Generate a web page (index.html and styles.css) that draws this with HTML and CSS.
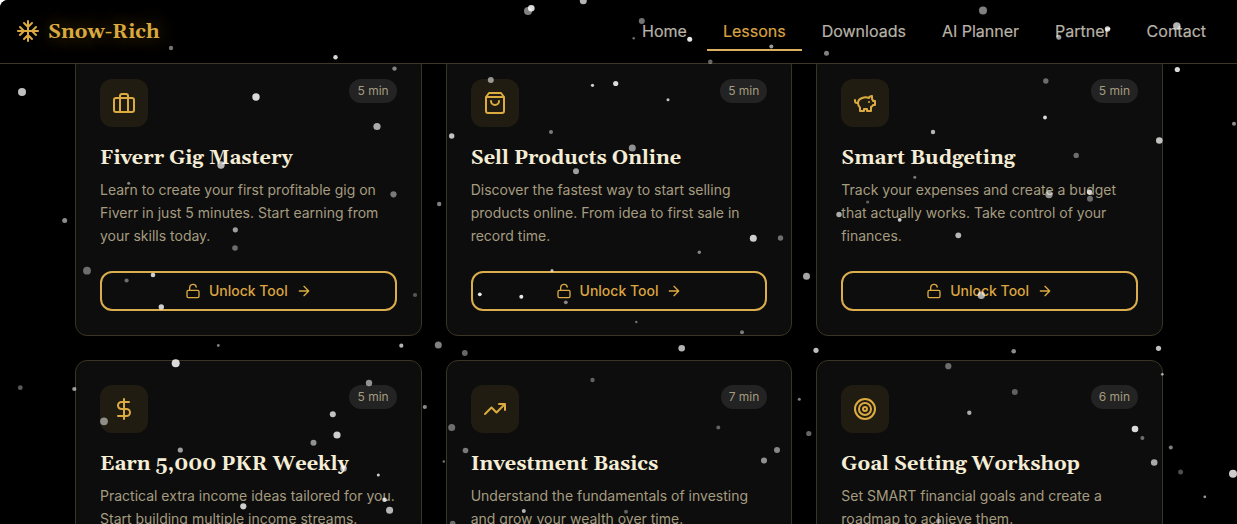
FILE: index.html
```
<!DOCTYPE html>
<html lang="en">
<head>
    <meta charset="UTF-8">
    <title>Snow-Rich</title>
    <link rel="stylesheet" href="styles.css">
</head>
<body>
<!-- shared icons -->
<svg class="sprite">
    <symbol id="unlock" viewBox="0 0 24 24"><rect x="3" y="11" width="18" height="11" rx="2"/><path d="M7 11V7a5 5 0 0 1 9.9-1"/></symbol>
    <symbol id="arrow" viewBox="0 0 24 24"><path d="M5 12h14M12 5l7 7-7 7"/></symbol>
</svg>

<div class="page">
    <header class="header">
        <a class="logo">
            <svg class="icon" viewBox="0 0 24 24"><path d="M2 12h20M12 2v20M20 16l-4-4 4-4M4 8l4 4-4 4M16 4l-4 4-4-4M8 20l4-4 4 4"/></svg>
            <span class="logo-text serif">Snow-Rich</span>
        </a>
        <nav class="nav">
            <a class="nav-link">Home</a>
            <a class="nav-link active">Lessons</a>
            <a class="nav-link">Downloads</a>
            <a class="nav-link">AI Planner</a>
            <a class="nav-link">Partner</a>
            <a class="nav-link">Contact</a>
        </nav>
    </header>

    <main class="lessons">
        <div class="card">
            <div class="card-top">
                <div class="card-icon"><svg class="icon" viewBox="0 0 24 24"><rect x="2" y="7" width="20" height="14" rx="2"/><path d="M16 21V5a2 2 0 0 0-2-2h-4a2 2 0 0 0-2 2v16"/></svg></div>
                <span class="time">5 min</span>
            </div>
            <h3 class="title serif">Fiverr Gig Mastery</h3>
            <p class="desc">Learn to create your first profitable gig on Fiverr in just 5 minutes. Start earning from your skills today.</p>
            <button class="unlock"><svg class="icon small"><use href="#unlock"/></svg>Unlock Tool<svg class="icon small"><use href="#arrow"/></svg></button>
        </div>
        <div class="card">
            <div class="card-top">
                <div class="card-icon"><svg class="icon" viewBox="0 0 24 24"><path d="M6 2 3 6v14a2 2 0 0 0 2 2h14a2 2 0 0 0 2-2V6l-3-4ZM3 6h18M16 10a4 4 0 0 1-8 0"/></svg></div>
                <span class="time">5 min</span>
            </div>
            <h3 class="title serif">Sell Products Online</h3>
            <p class="desc">Discover the fastest way to start selling products online. From idea to first sale in record time.</p>
            <button class="unlock"><svg class="icon small"><use href="#unlock"/></svg>Unlock Tool<svg class="icon small"><use href="#arrow"/></svg></button>
        </div>
        <div class="card">
            <div class="card-top">
                <div class="card-icon"><svg class="icon" viewBox="0 0 24 24"><path d="M19 5c-1.5 0-2.8 1.4-3 2-3.5-1.5-11-.3-11 5 0 1.8 0 3 2 4.5V20h4v-2h3v2h4v-4c1-.5 1.7-1 2-2h2v-4h-2c0-1-.5-1.5-1-2V5zM2 9v1c0 1.1.9 2 2 2h1M16 11h.01"/></svg></div>
                <span class="time">5 min</span>
            </div>
            <h3 class="title serif">Smart Budgeting</h3>
            <p class="desc">Track your expenses and create a budget that actually works. Take control of your finances.</p>
            <button class="unlock"><svg class="icon small"><use href="#unlock"/></svg>Unlock Tool<svg class="icon small"><use href="#arrow"/></svg></button>
        </div>
        <div class="card">
            <div class="card-top">
                <div class="card-icon"><svg class="icon" viewBox="0 0 24 24"><path d="M12 2v20M17 5H9.500a3.500 3.500 0 0 0 0 7h5a3.500 3.500 0 0 1 0 7H6"/></svg></div>
                <span class="time">5 min</span>
            </div>
            <h3 class="title serif">Earn 5,000 PKR Weekly</h3>
            <p class="desc">Practical extra income ideas tailored for you. Start building multiple income streams.</p>
            <button class="unlock"><svg class="icon small"><use href="#unlock"/></svg>Unlock Tool<svg class="icon small"><use href="#arrow"/></svg></button>
        </div>
        <div class="card">
            <div class="card-top">
                <div class="card-icon"><svg class="icon" viewBox="0 0 24 24"><path d="M22 7l-8.500 8.500-5-5L2 17M16 7h6v6"/></svg></div>
                <span class="time">7 min</span>
            </div>
            <h3 class="title serif">Investment Basics</h3>
            <p class="desc">Understand the fundamentals of investing and grow your wealth over time.</p>
            <button class="unlock"><svg class="icon small"><use href="#unlock"/></svg>Unlock Tool<svg class="icon small"><use href="#arrow"/></svg></button>
        </div>
        <div class="card">
            <div class="card-top">
                <div class="card-icon"><svg class="icon" viewBox="0 0 24 24"><circle cx="12" cy="12" r="10"/><circle cx="12" cy="12" r="6"/><circle cx="12" cy="12" r="2"/></svg></div>
                <span class="time">6 min</span>
            </div>
            <h3 class="title serif">Goal Setting Workshop</h3>
            <p class="desc">Set SMART financial goals and create a roadmap to achieve them.</p>
            <button class="unlock"><svg class="icon small"><use href="#unlock"/></svg>Unlock Tool<svg class="icon small"><use href="#arrow"/></svg></button>
        </div>
    </main>

    <svg class="snow" id="snow"></svg>
</div>

<script src="snow.js"></script>
</body>
</html>
```
FILE: styles.css
```
*{
    margin: 0;
    padding: 0;
    box-sizing: border-box;
}
body{
    background-color: #fff;
    font-family: Inter, "Liberation Sans", sans-serif;
    overflow: hidden;
}
.page{
    position: relative;
    height: 100vh;
    background-color: #000;
    border-top-left-radius: 8px;
    overflow: hidden;
}
.serif{
    font-family: Georgia, Gelasio, "DejaVu Serif", serif;
    font-weight: bold;
}
.sprite{
    display: none;
}
.icon{
    width: 24px;
    height: 24px;
    flex: none;
    fill: none;
    stroke: #dbab41;
    stroke-width: 2;
    stroke-linecap: round;
    stroke-linejoin: round;
}
.small{
    width: 16px;
    height: 16px;
}

/*header*/
.header{
    position: relative;
    z-index: 1;
    display: flex;
    justify-content: space-between;
    align-items: center;
    height: 64px;
    padding: 0 15px 1px 16px;
    background-color: #000;
    border-bottom: 1px solid #40372a;
}
.logo{
    display: flex;
    align-items: center;
    gap: 8px;
}
.logo-text{
    padding-top: 2px;
    font-size: 20px;
    line-height: 28px;
    color: #d9a93f;
    text-shadow: 0 0 20px rgba(219, 165, 32, 0.5);
}
.nav{
    display: flex;
    gap: 4px;
}
.nav-link{
    padding: 8px 16px;
    font-size: 16px;
    line-height: 24px;
    color: #b8b3a7;
    -webkit-text-stroke: 0.2px;
}
.active{
    color: #d9a441;
    box-shadow: inset 0 -2px #dcaf5c;
}

/*cards*/
.lessons{
    display: grid;
    grid-template-columns: repeat(3, 1fr);
    gap: 24px;
    width: 1088px;
    margin: -10px 74px 0 75px;
}
.card{
    display: flex;
    flex-direction: column;
    height: 282px;
    padding: 24px;
    background-color: #0d0d0d;
    border: 1px solid #393425;
    border-radius: 12px;
}
.card-top{
    display: flex;
    justify-content: space-between;
    align-items: flex-start;
    margin-bottom: 16px;
}
.card-icon{
    display: flex;
    align-items: center;
    justify-content: center;
    width: 48px;
    height: 48px;
    background-color: #211c11;
    border-radius: 12px;
}
.time{
    padding: 4px 8px;
    font-size: 12px;
    line-height: 16px;
    color: #a59c80;
    background-color: #232323;
    border-radius: 12px;
}
.title{
    padding-top: 1px;
    margin-bottom: 7px;
    font-size: 20px;
    line-height: 28px;
    color: #f5edd6;
    white-space: nowrap;
}
.desc{
    font-size: 14px;
    line-height: 22.75px;
    color: #a59c80;
}
.unlock{
    display: flex;
    align-items: center;
    justify-content: center;
    gap: 8px;
    height: 40px;
    margin-top: auto;
    padding-bottom: 1px;
    font-family: inherit;
    font-size: 14px;
    font-weight: 500;
    color: #dba540;
    background: none;
    border: 2px solid #dbad4c;
    border-radius: 12px;
}

/*snow*/
.snow{
    position: absolute;
    left: 0;
    top: 0;
    z-index: 2;
    width: 100%;
    height: 100%;
    fill: #fff;
    pointer-events: none;
}
```
FILE: snow.js
```
// x, y, radius, opacity
var flakes = [
    [171,48,2.2,.45],[335.5,57.3,2.2,.85],[394.5,68.6,2.2,.5],[22,92,4,.75],[256,97,3.7,.85],[377,126.5,3.6,.65],[221,165,3.7,.7],
    [528,11,4,.5],[531.3,8.3,3.3,.85],[583.3,.8,3.5,.7],[641.8,21,3,.45],[633.7,38.2,1.2,.45],[689.7,39.3,2.5,.9],[771.3,46.5,2,.6],
    [710.3,61.7,2.3,.4],[826.5,53.2,2.5,.5],[490.8,80,3,.55],[592.5,85.3,1.6,.8],[615.7,83.5,2.6,.85],[668,99.8,1.5,.75],[551,132,2,.45],
    [451.7,136,2.7,.75],[632.3,148,3.5,.55],[576,171.3,3,.6],
    [983,10.5,4,.5],[1107.5,29,2.7,.8],[1058.8,37.3,2.5,.6],[1176.8,26,3.7,.7],[1045.8,81,2.7,.4],[1045,117.5,1.9,.85],[933,132,2.2,.7],
    [1177.3,69.5,2.6,.85],[1234,123.7,2,.55],[1159.3,140.5,3.3,.75],[1076.2,155.4,2.7,.4],[914.8,177.3,1.5,.45],
    [128.7,183.3,1.5,.5],[393.5,194.3,3.1,.45],[64.7,220.4,2.5,.55],[235.3,229.8,2.6,.6],[235,248,2.8,.4],[87,270.7,3.9,.4],
    [126.6,280.5,2.1,.4],[153,275,2.3,.8],[161.3,307,2.7,.8],[415,295,2.1,.3],[218.3,345.5,1.4,.5],[401.3,345.7,2.1,.7],
    [439.2,204,2.2,.5],[753.3,238.2,3.5,.8],[780.5,238,2.7,.4],[699.3,252.3,1.7,.5],[552,270.5,1.5,.7],[479.8,294.3,1.9,.9],
    [521.3,296.8,2,.9],[565.8,302.3,1.9,.5],[806.5,276.3,3.5,.65],[636.3,322,1.3,.4],[742,332.3,2,.45],[438.3,345,3.5,.5],
    [464.8,353,2.9,.4],[681.7,348.2,3.3,.7],[816,350.3,2.6,.75],
    [1049,194.5,3.7,.55],[1089.5,192,2.6,.8],[1090,198.7,3,.4],[867.7,202,1.6,.35],[839,214.5,2.7,.65],[899.7,219.8,1.9,.8],
    [958.3,235.3,2.9,.7],[981.3,295.3,3.7,.65],[1013.7,351.3,2.3,.55],[1158.5,348.3,2.6,.75],
    [175.7,363.3,4,.85],[20.3,387.7,2.4,.35],[74.3,389,2.1,.6],[369,383,3.2,.55],[332.8,414.2,3,.75],[337,435,3.6,.8],
    [313.5,442.8,3,.55],[104,421.3,3.9,.5],[180.3,450,2.6,.6],[343.5,468.5,3.3,.65],[378.3,475,1.5,.8],[384.5,499.8,2.3,.8],
    [389.6,510.3,3.5,.7],[243.3,506.3,3.1,.8],
    [592.5,380,2.2,.35],[424.8,407,2.1,.55],[451.7,427.5,3.5,.4],[465.5,450.5,2.8,.45],[443.8,461.5,1.2,.45],[718.3,427.5,2,.35],
    [777,450,3,.5],[764,460.5,3,.55],[799.3,399.3,1.5,.5],[808.8,433.5,2.6,.4],[523.8,511,2,.7],[626,511.7,2,.35],[452.7,523.5,2.8,.4],
    [948.3,366.2,3.1,.4],[1014.8,392,3,.35],[969.3,412.8,2.2,.65],[1162.3,374.3,1.4,.6],[1135,429,3.3,.85],[1142.4,438,2,.4],
    [1154.2,462.5,3.3,.65],[1170.8,447.5,2,.5],[1180.6,472,2.5,.3],[1233,473.8,4,.8],[1204.8,496.8,1.4,.6],[938.5,521,2.5,.5]
];

var snow = document.getElementById("snow");
for(var i=0;i<flakes.length;i++){
    var c=document.createElementNS("http://www.w3.org/2000/svg", "circle");
    c.setAttribute("cx", flakes[i][0]);
    c.setAttribute("cy", flakes[i][1]);
    c.setAttribute("r", flakes[i][2]);
    c.setAttribute("opacity", flakes[i][3]);
    snow.appendChild(c);
}
```
